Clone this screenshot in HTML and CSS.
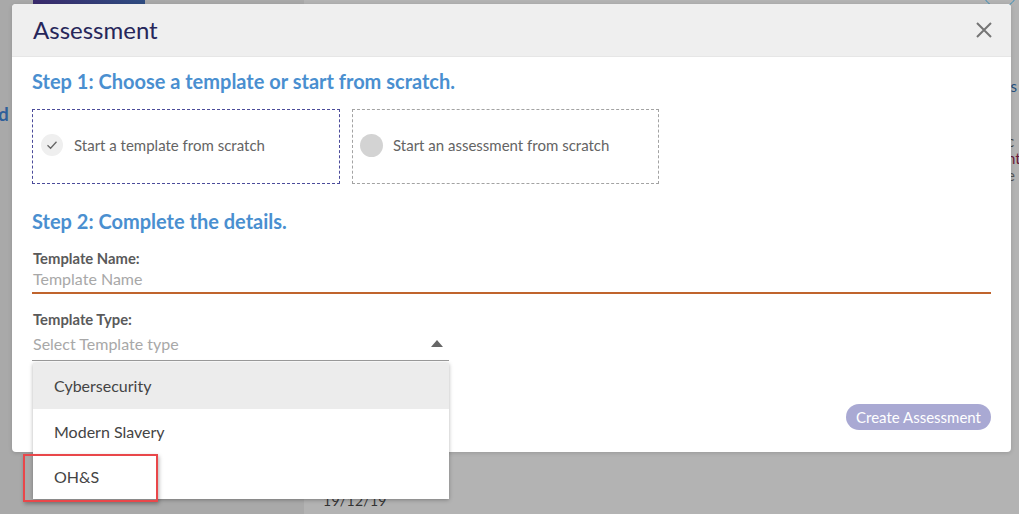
FILE: index.html
```html
<!DOCTYPE html>
<html>
<head>
<meta charset="utf-8">
<link rel="stylesheet" href="styles.css">
</head>
<body>
<div class="page">
  <aside class="sidebar">
    <div class="brand-bar"></div>
    <div class="side-link">d</div>
  </aside>
  <main class="content">
    <div class="top-ring"></div>
    <div class="right-text">
      <span class="rt rt-is">is</span>
      <span class="rt rt-c">c</span>
      <span class="rt rt-nt">nt</span>
      <span class="rt rt-e">e</span>
    </div>
    <div class="date">19/12/19</div>
  </main>
</div>

<div class="modal">
  <header class="modal-header">
    <h1 class="modal-title">Assessment</h1>
    <button class="close" aria-label="Close">
      <svg width="18" height="18" viewBox="0 0 18 18"><path d="M2 2 L16 16 M16 2 L2 16" stroke="#757575" stroke-width="2" fill="none"/></svg>
    </button>
  </header>
  <div class="modal-body">
    <h2 class="step">Step 1: Choose a template or start from scratch.</h2>
    <div class="choices">
      <div class="choice selected">
        <span class="radio checked">
          <svg width="12" height="10" viewBox="0 0 12 10"><path d="M1.5 5.2 L4.6 8.2 L10.5 1.8" stroke="#666" stroke-width="1.3" fill="none"/></svg>
        </span>
        <span class="choice-label">Start a template from scratch</span>
      </div>
      <div class="choice">
        <span class="radio"></span>
        <span class="choice-label">Start an assessment from scratch</span>
      </div>
    </div>
    <h2 class="step step2">Step 2: Complete the details.</h2>
    <div class="field">
      <label class="field-label">Template Name:</label>
      <div class="input active">Template Name</div>
    </div>
    <div class="field field-type">
      <label class="field-label">Template Type:</label>
      <div class="input select">
        <span>Select Template type</span>
        <span class="caret"></span>
      </div>
    </div>
    <div class="actions">
      <button class="create">Create Assessment</button>
    </div>
  </div>
</div>

<ul class="dropdown">
  <li class="opt hover">Cybersecurity</li>
  <li class="opt">Modern Slavery</li>
  <li class="opt last">OH&amp;S</li>
</ul>
<div class="highlight"></div>
</body>
</html>
```

FILE: styles.css
```css
* { box-sizing: border-box; }
html, body { margin: 0; padding: 0; }
body {
  width: 1019px;
  height: 514px;
  overflow: hidden;
  background: #b3b3b3;
  font-family: Lato, "Open Sans", sans-serif;
  position: relative;
}
.page {
  display: flex;
  height: 514px;
}
.sidebar {
  width: 304px;
  background: #a9a9a9;
  position: relative;
}
.brand-bar {
  margin-left: 33px;
  width: 112px;
  height: 5px;
  background: linear-gradient(90deg, #3a2a6c, #2f4d82);
}
.side-link {
  margin-top: 98px;
  font-size: 19px;
  font-weight: 700;
  color: #2e5f9a;
  line-height: 22px;
  margin-left: -2px;
}
.content {
  flex: 1;
  position: relative;
}
.top-ring {
  position: absolute;
  left: 678px;
  top: -28px;
  width: 36px;
  height: 36px;
  border: 1.5px solid #3a8fb8;
  border-radius: 50%;
}
.right-text {
  position: absolute;
  left: 703px;
  top: 78px;
  display: flex;
  flex-direction: column;
  font-size: 15px;
  line-height: 17px;
}
.rt-is { color: #24507e; }
.rt-c { margin-top: 38px; color: #444; }
.rt-nt { color: #6a1a3a; }
.rt-e { color: #555; }
.date {
  position: absolute;
  left: 19px;
  top: 492px;
  font-size: 14px;
  color: #333;
  letter-spacing: 0.3px;
}

.modal {
  position: absolute;
  left: 12px;
  top: 4px;
  width: 999px;
  background: #fff;
  border-radius: 4px;
  overflow: hidden;
  box-shadow: 0 1px 4px rgba(0,0,0,0.15);
}
.modal-header {
  height: 53px;
  background: #efefef;
  border-bottom: 1px solid #e6e6e6;
  display: flex;
  align-items: center;
  justify-content: space-between;
  padding: 0 18px 0 21px;
}
.modal-title {
  margin: 0;
  font-size: 24px;
  font-weight: 400;
  color: #26265a;
  line-height: 28px;
}
.close {
  border: 0;
  background: none;
  padding: 0;
  width: 18px;
  height: 18px;
  display: flex;
}
.modal-body {
  padding: 12px 20px 22px 20px;
}
.step {
  margin: 0;
  font-size: 20px;
  font-weight: 700;
  color: #4a8fd0;
  line-height: 24px;
}
.choices {
  display: flex;
  gap: 12px;
  margin-top: 16px;
}
.choice {
  width: 308px;
  height: 75px;
  border: 1px dashed #a3a3a3;
  display: flex;
  align-items: center;
  padding-left: 7px;
  padding-bottom: 3px;
}
.choice + .choice { width: 307px; }
.choice.selected {
  border-color: #4b4b9a;
  padding-left: 8px;
}
.radio {
  width: 23px;
  height: 23px;
  border-radius: 50%;
  background: #d3d3d3;
  display: flex;
  align-items: center;
  justify-content: center;
  margin-right: 10px;
}
.radio.checked {
  width: 22px;
  height: 22px;
  background: #efefef;
  margin-right: 11px;
}
.choice-label {
  font-size: 15px;
  color: #646464;
}
.step2 { margin-top: 25px; }
.field { margin-top: 17px; }
.field-label {
  display: block;
  font-size: 14.8px;
  font-weight: 700;
  color: #5a5a5a;
  line-height: 17px;
  padding-left: 1px;
}
.input {
  margin-top: 2px;
  font-size: 16px;
  color: #a8a8a8;
  line-height: 20px;
  padding-left: 1px;
}
.input.active {
  border-bottom: 2.5px solid #c0642d;
  height: 25px;
}
.field-type { margin-top: 17px; }
.select {
  width: 417px;
  margin-top: 6px;
  height: 27px;
  border-bottom: 1px solid #9a9a9a;
  display: flex;
  justify-content: space-between;
  align-items: flex-start;
  padding-right: 6px;
}
.caret {
  width: 0;
  height: 0;
  border-left: 6px solid transparent;
  border-right: 6px solid transparent;
  border-bottom: 7px solid #666;
  margin-top: 6px;
}
.actions {
  display: flex;
  justify-content: flex-end;
  margin-top: 43px;
}
.create {
  height: 26px;
  padding: 0;
  border: 0;
  border-radius: 13px;
  background: #a9a9d3;
  color: #fff;
  font-family: Lato, sans-serif;
  font-size: 15px;
  width: 145px;
}

.dropdown {
  position: absolute;
  left: 33px;
  top: 363px;
  width: 416px;
  margin: 0;
  padding: 0;
  list-style: none;
  background: #fff;
  box-shadow: 0 1px 4px rgba(0,0,0,0.3);
}
.opt {
  height: 46px;
  display: flex;
  align-items: center;
  padding-left: 21px;
  padding-bottom: 2px;
  font-size: 16px;
  color: #444;
}
.opt.hover { background: #ececec; }
.opt.last { height: 44px; }

.highlight {
  position: absolute;
  left: 23px;
  top: 454px;
  width: 135px;
  height: 48px;
  border: 2px solid #e9474a;
  box-shadow: 1px 2px 4px rgba(0,0,0,0.3);
}
```
